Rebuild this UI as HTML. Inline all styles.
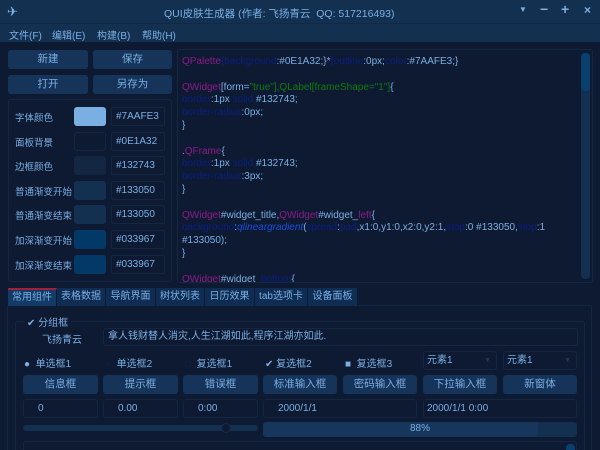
<!DOCTYPE html>
<html><head><meta charset="utf-8"><style>
*{margin:0;padding:0;box-sizing:border-box}
html{width:600px;height:450px;overflow:hidden}
body{width:600px;height:450px;overflow:hidden;background:#0E1A32;font-family:"Liberation Sans","Noto Sans CJK SC",sans-serif;font-size:11px;color:#7AAFE3;position:relative}
.a{position:absolute}
.btn{position:absolute;background:#16345a;border-radius:3px;color:#7AAFE3;text-align:center;font-size:10.5px}
.box{position:absolute;border:1px solid #132743;border-radius:3px;background:#0E1A32}
.code{font-size:10px;line-height:12.8px;color:#7AAFE3;white-space:pre}
.k{color:#8b1a8b}.b{color:#0a1f80}.g{color:#0c7a0c}.i{color:#1a4ee0;font-style:italic}
.tab{position:absolute;top:288px;height:18px;background:#0f2d52;color:#7AAFE3;font-size:10px;line-height:17px;text-align:center;border-right:1px solid #0E1A32}
.sw{position:absolute;left:74px;width:32px;height:19px;border-radius:3px}
.hx{position:absolute;left:111px;width:54px;height:19px;border:1px solid #132743;border-radius:2px;padding-left:4px;line-height:17px;font-size:10px}
.lb{position:absolute;left:15px;font-size:9.5px}
</style></head><body>
<div class="a" style="left:0;top:0;width:600px;height:24px;background:#133050"></div>
<div class="a" style="left:7px;top:4px;font-size:13px;color:#7AAFE3">✈</div>
<div class="a" style="left:164px;top:6px;font-size:10.5px">QUI皮肤生成器 (作者: 飞扬青云&nbsp;&nbsp;QQ: 517216493)</div>
<div class="a" style="left:519px;top:5px;font-size:8px">▼</div>
<div class="a" style="left:540px;top:1px;font-size:14px;font-weight:bold">−</div>
<div class="a" style="left:561px;top:1px;font-size:14px;font-weight:bold">+</div>
<div class="a" style="left:584px;top:3px;font-size:12px;font-weight:bold">×</div>
<div class="a" style="left:0;top:23px;width:600px;height:19px;background:#133050;border-top:1px solid #0f2a48"></div>
<div class="a" style="left:9px;top:27px;font-size:10px">文件(F)</div>
<div class="a" style="left:52px;top:27px;font-size:10px">编辑(E)</div>
<div class="a" style="left:97px;top:27px;font-size:10px">构建(B)</div>
<div class="a" style="left:142px;top:27px;font-size:10px">帮助(H)</div>
<div class="btn" style="left:8px;top:50px;width:80px;height:19px;line-height:19px">新建</div>
<div class="btn" style="left:93px;top:50px;width:79px;height:19px;line-height:19px">保存</div>
<div class="btn" style="left:8px;top:75px;width:80px;height:19px;line-height:19px">打开</div>
<div class="btn" style="left:93px;top:75px;width:79px;height:19px;line-height:19px">另存为</div>
<div class="box" style="left:8px;top:99px;width:164px;height:183px"></div>
<div class="lb" style="top:110px">字体颜色</div><div class="sw" style="top:107px;background:#7AAFE3"></div><div class="hx" style="top:107px">#7AAFE3</div>
<div class="lb" style="top:135px">面板背景</div><div class="sw" style="top:132px;background:#0E1A32;border:1px solid #132743"></div><div class="hx" style="top:132px">#0E1A32</div>
<div class="lb" style="top:159px">边框颜色</div><div class="sw" style="top:156px;background:#132743"></div><div class="hx" style="top:156px">#132743</div>
<div class="lb" style="top:184px">普通渐变开始</div><div class="sw" style="top:181px;background:#133050"></div><div class="hx" style="top:181px">#133050</div>
<div class="lb" style="top:208px">普通渐变结束</div><div class="sw" style="top:205px;background:#133050"></div><div class="hx" style="top:205px">#133050</div>
<div class="lb" style="top:233px">加深渐变开始</div><div class="sw" style="top:230px;background:#033967"></div><div class="hx" style="top:230px">#033967</div>
<div class="lb" style="top:258px">加深渐变结束</div><div class="sw" style="top:255px;background:#033967"></div><div class="hx" style="top:255px">#033967</div>
<div class="box" style="left:177px;top:49px;width:416px;height:234px;overflow:hidden">
<div class="code" style="position:absolute;left:4px;top:6px"><span class="k">QPalette</span><span class="b">{background</span>:#0E1A32;}*<span class="b">{outline</span>:0px;<span class="b">color</span>:#7AAFE3;}

<span class="k">QWidget</span>[form=<span class="g">"true"],QLabel[frameShape="1"]</span>{
<span class="b">border</span>:1px <span class="b">solid</span> #132743;
<span class="b">border-radius</span>:0px;
}

.<span class="k">QFrame</span>{
<span class="b">border</span>:1px <span class="b">solid</span> #132743;
<span class="b">border-radius</span>:3px;
}

<span class="k">QWidget</span>#widget_title,<span class="k">QWidget</span>#widget_<span class="k">left</span>{
<span class="b">background</span>:<span class="i">qlineargradient</span>(<span class="b">spread</span>:<span class="b">pad</span>,x1:0,y1:0,x2:0,y2:1,<span class="b">stop</span>:0 #133050,<span class="b">stop</span>:1
#133050);
}

<span class="k">QWidget</span>#widget_<span class="b">bottom</span>{</div>
<div class="a" style="left:403px;top:3px;width:9px;height:226px;background:#133050;border-radius:4px"></div>
<div class="a" style="left:403px;top:3px;width:9px;height:38px;background:#0a4070;border-radius:4px"></div>
</div>
<div class="a" style="left:7px;top:305px;width:585px;height:150px;border:1px solid #132743"></div>
<div class="tab" style="left:8px;width:49px;background:#133b66;border-top:2px solid #a0203a;line-height:15px">常用组件</div>
<div class="tab" style="left:57px;width:49px">表格数据</div>
<div class="tab" style="left:106px;width:50px">导航界面</div>
<div class="tab" style="left:156px;width:49px">树状列表</div>
<div class="tab" style="left:205px;width:50px">日历效果</div>
<div class="tab" style="left:255px;width:53px">tab选项卡</div>
<div class="tab" style="left:308px;width:50px">设备面板</div>
<div class="box" style="left:15px;top:321px;width:570px;height:140px"></div>
<div class="a" style="left:24px;top:314px;background:#0E1A32;padding:0 3px;font-size:10px">✔ 分组框</div>
<div class="a" style="left:42px;top:331px;font-size:10px">飞扬青云</div>
<div class="box" style="left:103px;top:328px;width:475px;height:18px;padding-left:4px;line-height:16px;font-size:10px">拿人钱财替人消灾,人生江湖如此,程序江湖亦如此.</div>
<div class="a" style="left:24px;top:355px;font-size:10px">●&nbsp; 单选框1</div>
<div class="a" style="left:105px;top:355px;font-size:10px"><span style="color:#132743">○</span>&nbsp; 单选框2</div>
<div class="a" style="left:185px;top:355px;font-size:10px"><span style="color:#132743">□</span>&nbsp; 复选框1</div>
<div class="a" style="left:265px;top:355px;font-size:10px">✔ 复选框2</div>
<div class="a" style="left:345px;top:355px;font-size:10px">■&nbsp; 复选框3</div>
<div class="box" style="left:423px;top:351px;width:74px;height:19px;padding-left:3px;line-height:17px;font-size:10px">元素1<span style="position:absolute;right:5px;font-size:7px;color:#1d3a5c">▼</span></div>
<div class="box" style="left:503px;top:351px;width:74px;height:19px;padding-left:3px;line-height:17px;font-size:10px">元素1<span style="position:absolute;right:5px;font-size:7px;color:#1d3a5c">▼</span></div>
<div class="btn" style="left:23px;top:375px;width:75px;height:19px;line-height:19px">信息框</div>
<div class="btn" style="left:103px;top:375px;width:75px;height:19px;line-height:19px">提示框</div>
<div class="btn" style="left:183px;top:375px;width:75px;height:19px;line-height:19px">错误框</div>
<div class="btn" style="left:263px;top:375px;width:74px;height:19px;line-height:19px">标准输入框</div>
<div class="btn" style="left:343px;top:375px;width:74px;height:19px;line-height:19px">密码输入框</div>
<div class="btn" style="left:423px;top:375px;width:74px;height:19px;line-height:19px">下拉输入框</div>
<div class="btn" style="left:503px;top:375px;width:74px;height:19px;line-height:19px">新窗体</div>
<div class="box" style="left:23px;top:399px;width:75px;height:19px;padding-left:14px;line-height:17px;font-size:10px">0</div>
<div class="box" style="left:103px;top:399px;width:75px;height:19px;padding-left:14px;line-height:17px;font-size:10px">0.00</div>
<div class="box" style="left:183px;top:399px;width:75px;height:19px;padding-left:14px;line-height:17px;font-size:10px">0:00</div>
<div class="box" style="left:263px;top:399px;width:154px;height:19px;padding-left:14px;line-height:17px;font-size:10px">2000/1/1</div>
<div class="box" style="left:423px;top:399px;width:154px;height:19px;padding-left:3px;line-height:17px;font-size:10px">2000/1/1 0:00</div>
<div class="a" style="left:23px;top:425px;width:235px;height:6px;background:#133050;border-radius:3px"></div>
<div class="a" style="left:221px;top:423px;width:10px;height:10px;background:#0E1A32;border:1px solid #133050;border-radius:5px"></div>
<div class="a" style="left:263px;top:422px;width:314px;height:15px;background:#133050;border-radius:3px"></div>
<div class="a" style="left:263px;top:422px;width:275px;height:15px;background:#16365c;border-radius:3px"></div>
<div class="a" style="left:263px;top:423px;width:314px;text-align:center;font-size:10px">88%</div>
<div class="box" style="left:23px;top:441px;width:554px;height:20px"></div>
<div class="a" style="left:566px;top:444px;width:9px;height:10px;background:#0a4070;border-radius:4px"></div>
</body></html>
